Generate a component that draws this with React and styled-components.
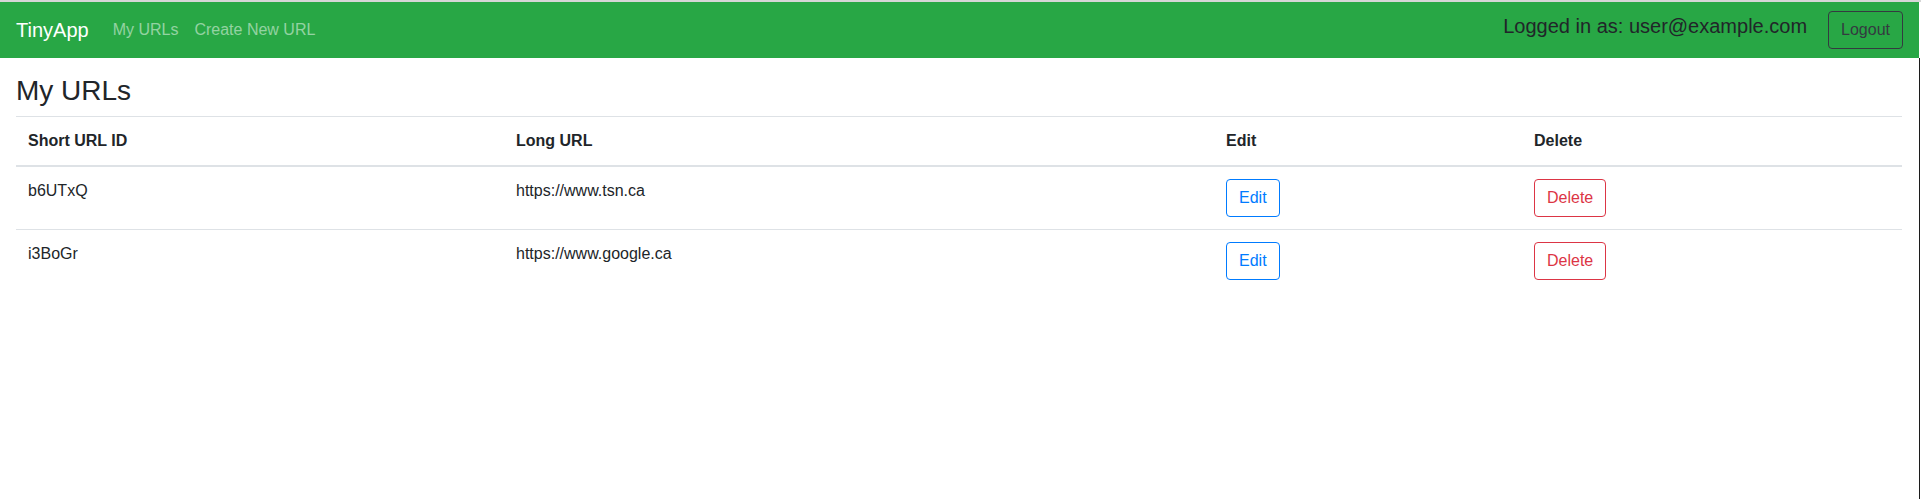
import React from 'react'
import styled, { createGlobalStyle } from 'styled-components'

const GlobalStyle = createGlobalStyle`
    html, body {
        margin: 0;
        padding: 0;
        background: #fff;
    }
    body {
        font-family: "Liberation Sans", Arial, Helvetica, sans-serif;
        font-size: 16px;
        line-height: 1.5;
        color: #212529;
    }
    * {
        box-sizing: border-box;
    }
`

const Page = styled.div`
    width: 1921px;
    min-height: 499px;
    display: flex;
    flex-direction: column;
    border-top: 2px solid #d6d6d6;
`

const Navbar = styled.nav`
    width: 1919px;
    height: 56px;
    background: #28a745;
    display: flex;
    align-items: center;
    justify-content: space-between;
    padding: 8px 16px;
`

const NavLeft = styled.div`
    display: flex;
    align-items: center;
`

const Brand = styled.a`
    color: #fff;
    font-size: 20px;
    line-height: 30px;
    padding: 5px 0;
    margin-right: 16px;
    text-decoration: none;
`

const NavLink = styled.a`
    color: rgba(255, 255, 255, 0.5);
    padding: 8px;
    text-decoration: none;
`

const NavRight = styled.div`
    display: flex;
    align-items: center;
`

const LoggedIn = styled.h5`
    margin: 0 21px 8px 0;
    font-size: 20px;
    font-weight: 500;
    line-height: 1.2;
    color: #212529;
`

const Button = styled.button`
    font-family: inherit;
    font-size: 16px;
    line-height: 1.5;
    padding: 6px 12px;
    border-radius: 4px;
    background: transparent;
    border: 1px solid ${p => p.color};
    color: ${p => p.color};
    cursor: pointer;
`

const Main = styled.main`
    flex: 1;
    width: 1920px;
    border-right: 1px solid #1c1c1c;
    padding: 16px 16px 0 16px;
`

const Titulo = styled.h3`
    margin: 0 0 8px 0;
    font-size: 28px;
    font-weight: 500;
    line-height: 1.2;
    color: #212529;
`

const Tabela = styled.table`
    width: 1886px;
    border-collapse: collapse;
    table-layout: fixed;
`

const Th = styled.th`
    width: ${p => p.w}px;
    text-align: left;
    font-weight: 700;
    padding: 12px;
    border-top: 1px solid #dee2e6;
    border-bottom: 2px solid #dee2e6;
    vertical-align: bottom;
`

const Td = styled.td`
    padding: 12px;
    border-top: 1px solid #dee2e6;
    vertical-align: top;
`

const urls = [
    { id: 'b6UTxQ', longUrl: 'https://www.tsn.ca' },
    { id: 'i3BoGr', longUrl: 'https://www.google.ca' },
]

export default function App() {
    return (
        <>
            <GlobalStyle />
            <Page>
                <Navbar>
                    <NavLeft>
                        <Brand href="#">TinyApp</Brand>
                        <NavLink href="#">My URLs</NavLink>
                        <NavLink href="#">Create New URL</NavLink>
                    </NavLeft>
                    <NavRight>
                        <LoggedIn>Logged in as: user@example.com</LoggedIn>
                        <Button color="#343a40">Logout</Button>
                    </NavRight>
                </Navbar>
                <Main>
                    <Titulo>My URLs</Titulo>
                    <Tabela>
                        <thead>
                            <tr>
                                <Th w={488}>Short URL ID</Th>
                                <Th w={710}>Long URL</Th>
                                <Th w={308}>Edit</Th>
                                <Th w={380}>Delete</Th>
                            </tr>
                        </thead>
                        <tbody>
                            {urls.map(u => (
                                <tr key={u.id}>
                                    <Td>{u.id}</Td>
                                    <Td>{u.longUrl}</Td>
                                    <Td><Button color="#007bff">Edit</Button></Td>
                                    <Td><Button color="#dc3545">Delete</Button></Td>
                                </tr>
                            ))}
                        </tbody>
                    </Tabela>
                </Main>
            </Page>
        </>
    )
}
